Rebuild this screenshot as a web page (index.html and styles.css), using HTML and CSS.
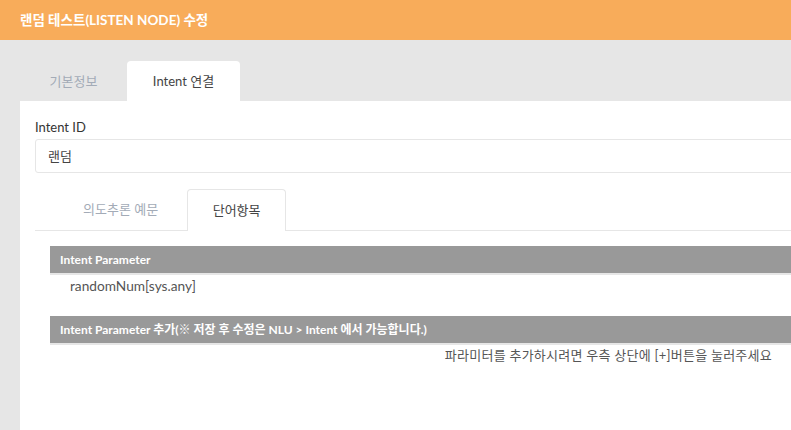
FILE: index.html
```html
<!DOCTYPE html>
<html lang="ko">
<head>
<meta charset="utf-8">
<title>랜덤 테스트(LISTEN NODE) 수정</title>
<link rel="stylesheet" href="styles.css">
</head>
<body>
<div class="modal">
  <div class="modal-header">랜덤 테스트(LISTEN NODE) 수정</div>
  <div class="modal-body">
    <div class="tabs">
      <div class="tab">기본정보</div>
      <div class="tab active">Intent 연결</div>
    </div>
    <div class="panel">
      <div class="label">Intent ID</div>
      <div class="input">랜덤</div>
      <div class="subtabs">
        <div class="subtab">의도추론 예문</div>
        <div class="subtab active">단어항목</div>
      </div>
      <div class="section">
        <div class="th">Intent Parameter</div>
        <div class="row">randomNum[sys.any]</div>
        <div class="th">Intent Parameter 추가(※ 저장 후 수정은 NLU &gt; Intent 에서 가능합니다.)</div>
        <div class="hint">파라미터를 추가하시려면 우측 상단에 [+]버튼을 눌러주세요</div>
      </div>
    </div>
  </div>
</div>
</body>
</html>
```
FILE: styles.css
```css
html, body {
  margin: 0;
  padding: 0;
  overflow: hidden;
  height: 430px;
  background: #e6e6e6;
  font-family: "Lato", "Noto Sans CJK KR", sans-serif;
}
.modal {
  width: 791px;
  height: 430px;
  overflow: hidden;
}
.modal-header {
  height: 40px;
  background: #f8ac5a;
  color: #fff;
  font-weight: bold;
  font-size: 13.5px;
  line-height: 40px;
  padding-left: 20px;
  white-space: nowrap;
}
.modal-body {
  padding: 21px 0 0 20px;
  background: #e6e6e6;
  height: 369px;
  box-sizing: border-box;
}
.tabs {
  display: flex;
  height: 40px;
}
.tab {
  width: 107px;
  text-align: center;
  line-height: 40px;
  font-size: 13px;
  color: #a3abb7;
}
.tab.active {
  width: 113px;
  background: #fff;
  color: #444;
  border-radius: 4px 4px 0 0;
}
.panel {
  background: #fff;
  width: 1000px;
  height: 329px;
  padding: 18px 0 0 15px;
  box-sizing: border-box;
}
.label {
  font-size: 13px;
  color: #333;
  line-height: 16px;
  margin-bottom: 4px;
}
.input {
  height: 34px;
  box-sizing: border-box;
  border: 1px solid #e6e6e6;
  border-radius: 3px;
  padding-left: 12px;
  line-height: 32px;
  font-size: 13px;
  color: #444;
}
.subtabs {
  display: flex;
  margin-top: 16px;
  height: 41px;
  border-bottom: 1px solid #e6e6e6;
}
.subtab {
  padding: 0 29px 0 48px;
  line-height: 41px;
  font-size: 13px;
  color: #a3abb7;
}
.subtab.active {
  padding: 0;
  width: 99px;
  box-sizing: border-box;
  text-align: center;
  color: #444;
  background: #fff;
  border: 1px solid #e6e6e6;
  border-bottom: none;
  border-radius: 4px 4px 0 0;
  height: 42px;
  line-height: 41px;
}
.section {
  padding: 15px 0 0 15px;
}
.th {
  height: 27px;
  line-height: 27px;
  background: #999;
  color: #fff;
  font-weight: bold;
  font-size: 12px;
  padding-left: 10px;
  border-bottom: 2px solid #e6e6e6;
  white-space: nowrap;
}
.row {
  height: 41px;
  padding-left: 20px;
  line-height: 21px;
  font-size: 13.7px;
  color: #555;
}
.hint {
  width: 722px;
  text-align: right;
  font-size: 13px;
  letter-spacing: 0.25px;
  color: #555;
  line-height: 20px;
  white-space: nowrap;
}
```
